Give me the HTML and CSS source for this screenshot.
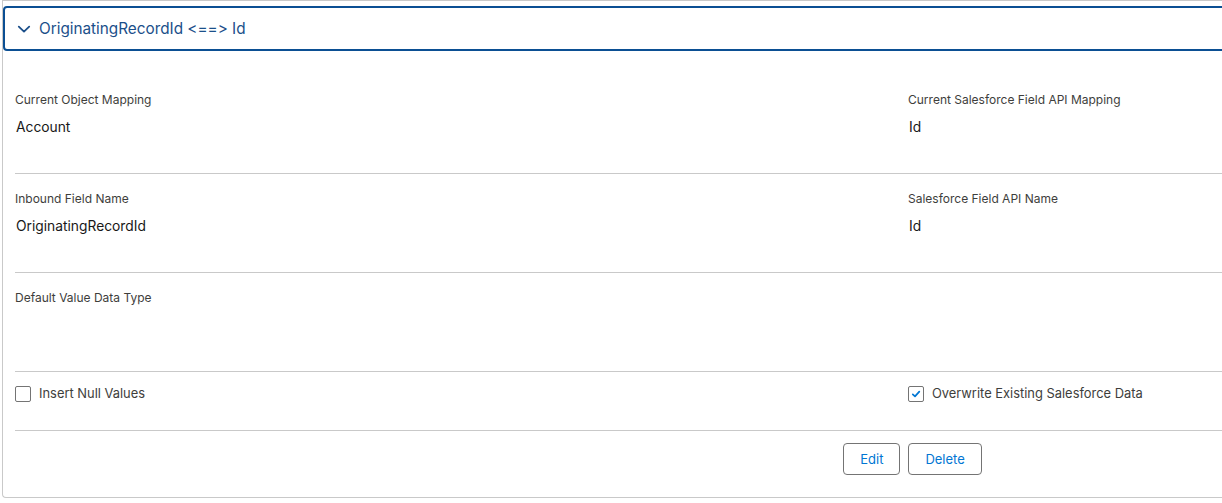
FILE: index.html
```html
<!DOCTYPE html>
<html lang="en">
<head>
    <meta charset="UTF-8">
    <title>Field Mapping</title>
    <link rel="stylesheet" href="styles.css">
</head>
<body>
    <div class="mapping-card">
        <!-- Section header (expanded) -->
        <div class="section-head">
            <button class="section-toggle" type="button">
                <svg class="chevron" width="14" height="14" viewBox="0 0 14 14">
                    <path d="M1.8 4.6 L7 9.6 L12.2 4.6" fill="none" stroke="currentColor" stroke-width="1.8" stroke-linecap="round" stroke-linejoin="round"/>
                </svg>
                <span>OriginatingRecordId &lt;==&gt; Id</span>
            </button>
        </div>

        <div class="section-body">
            <div class="field-row">
                <div class="field">
                    <div class="field-label">Current Object Mapping</div>
                    <div class="field-value">Account</div>
                </div>
                <div class="field">
                    <div class="field-label">Current Salesforce Field API Mapping</div>
                    <div class="field-value">Id</div>
                </div>
            </div>

            <div class="field-row">
                <div class="field">
                    <div class="field-label">Inbound Field Name</div>
                    <div class="field-value">OriginatingRecordId</div>
                </div>
                <div class="field">
                    <div class="field-label">Salesforce Field API Name</div>
                    <div class="field-value">Id</div>
                </div>
            </div>

            <div class="field-row">
                <div class="field">
                    <div class="field-label">Default Value Data Type</div>
                    <div class="field-value"></div>
                </div>
                <div class="field"></div>
            </div>

            <div class="field-row checks">
                <label class="check">
                    <span class="check-box"></span>
                    Insert Null Values
                </label>
                <label class="check">
                    <span class="check-box">
                        <svg width="10" height="10" viewBox="0 0 10 10">
                            <path d="M1.8 5.4 L4 7.4 L8.3 2.6" fill="none" stroke="currentColor" stroke-width="1.7" stroke-linecap="round" stroke-linejoin="round"/>
                        </svg>
                    </span>
                    Overwrite Existing Salesforce Data
                </label>
            </div>

            <div class="actions">
                <button class="btn" type="button">Edit</button>
                <button class="btn" type="button">Delete</button>
            </div>
        </div>
    </div>
</body>
</html>
```

FILE: styles.css
```css
body {
    margin: 0;
    overflow: hidden;
    background-color: #ffffff;
    font-family: Inter, "Liberation Sans", Arial, sans-serif;
    font-feature-settings: "calt" 0, "liga" 0; /* keep <==> as plain characters */
    color: #181818;
}

/* Card runs off the right edge of the window */
.mapping-card {
    width: 1810px;
    margin-left: 2px;
    height: 498px;
    border: 1px solid #c9c9c9;
    border-right: none;
    border-radius: 0 0 0 4px;
    box-sizing: border-box;
}

.section-head {
    padding-top: 5px;
}

.section-toggle {
    display: flex;
    align-items: center;
    gap: 8px;
    width: 100%;
    height: 45px;
    margin: 0;
    padding: 0 0 0 12px;
    background: #ffffff;
    border: 2px solid #0b4f93;
    border-radius: 4px;
    color: #1b4f8a;
    font-family: inherit;
    font-feature-settings: inherit;
    font-size: 15.3px;
    text-align: left;
}

.chevron {
    flex: none;
}

.section-body {
    padding: 24px 0 0 12px;
}

.field-row {
    display: grid;
    grid-template-columns: 893px 893px;
    padding: 16px 0 36px;
    border-bottom: 1px solid #c9c9c9;
}

.field-label {
    font-size: 12px;
    line-height: 18px;
    color: #3e3e3c;
}

.field-value {
    margin-top: 8px;
    padding-left: 1px;
    font-size: 13.8px;
    line-height: 20px;
    min-height: 20px;
}

.field-row.checks {
    padding: 12px 0 26px;
}

.check {
    display: flex;
    align-items: center;
    gap: 8px;
    font-size: 12.9px;
    line-height: 20px;
    color: #3e3e3c;
}

.check-box {
    display: flex;
    align-items: center;
    justify-content: center;
    width: 16px;
    height: 16px;
    box-sizing: border-box;
    border: 1px solid #747474;
    border-radius: 2px;
    background: #ffffff;
    color: #0176d3;
}

.actions {
    display: flex;
    justify-content: center;
    gap: 8px;
    width: 1786px;
    padding: 12px 0 0 9px;
    box-sizing: border-box;
}

.btn {
    height: 32px;
    padding: 0 16px;
    background: #ffffff;
    border: 1px solid #747474;
    border-radius: 4px;
    color: #0176d3;
    font-family: inherit;
    font-size: 13px;
}
```
